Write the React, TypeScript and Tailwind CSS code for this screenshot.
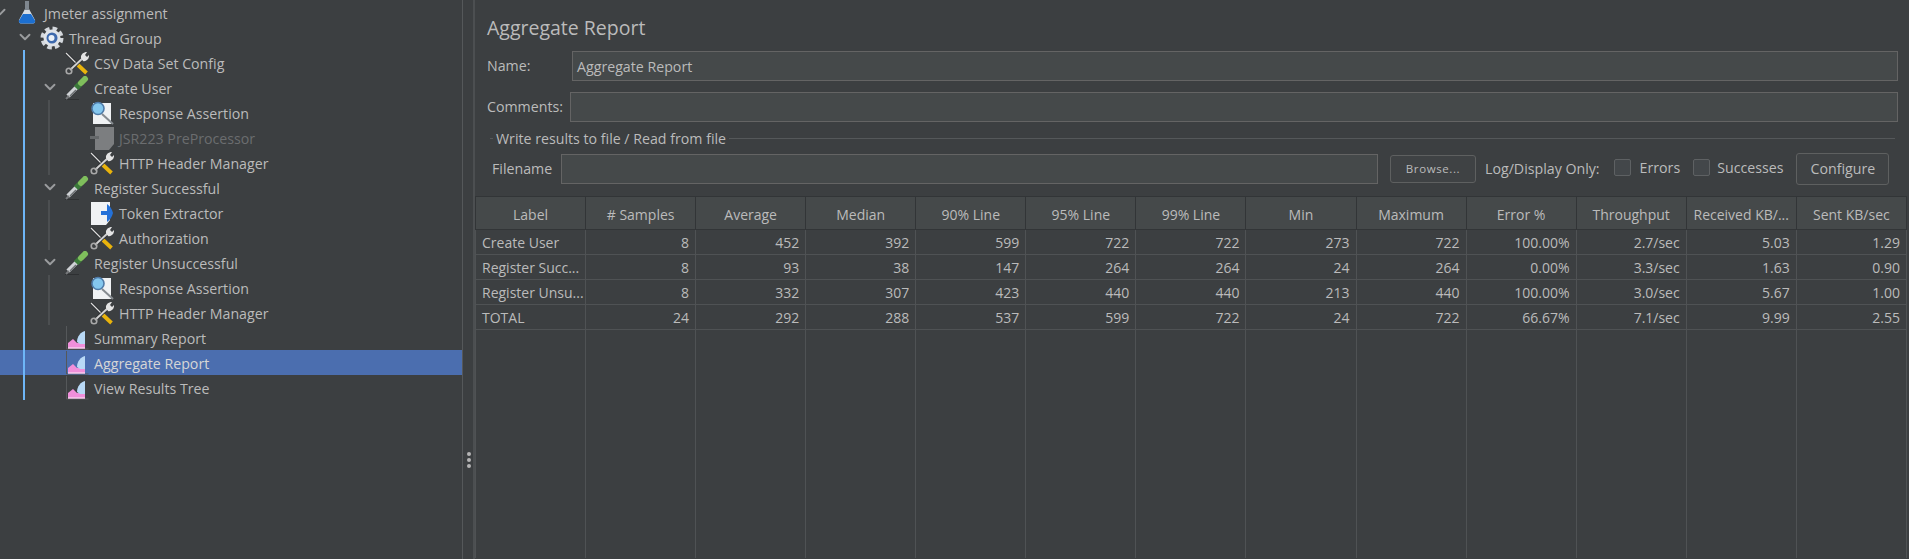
import { ChevronDown } from 'lucide-react';

const FONT = "font-['Open_Sans','Noto_Sans',sans-serif]";

const Flask = () => (
  <svg width="24" height="25" viewBox="0 0 24 25">
    <path d="M10 1h4v8l6 11c.5 2-.5 3.500-2 3.500H6c-1.500 0-2.500-1.500-2-3.500l6-11z" fill="#d5dde6" />
    <path d="M8 14h8l4 6.500c.5 1.500-.5 3-2 3H6c-1.500 0-2.500-1.500-2-3z" fill="#1c6fd0" />
    <rect x="10" y="1" width="4" height="9" fill="#7f878f" />
  </svg>
);

const Gear = () => (
  <svg width="24" height="24" viewBox="0 0 24 24">
    <circle cx="12" cy="12" r="9.500" fill="none" stroke="#d4d8dd" strokeWidth="4" strokeDasharray="4.500 3" />
    <circle cx="12" cy="12" r="8.500" fill="#dfe3e8" />
    <circle cx="12" cy="12" r="5.500" fill="#3d69ad" />
    <circle cx="11.500" cy="12" r="3" fill="#eaf0f7" />
  </svg>
);

const Tools = () => (
  <svg width="24" height="24" viewBox="0 0 24 24" fill="none">
    <path d="M1 2l13 13" stroke="#222426" strokeWidth="2.500" />
    <path d="M1 2l13 13" stroke="#dcdcdc" strokeWidth="1.200" />
    <path d="M13 14l8.500 8" stroke="#e9b30c" strokeWidth="3.800" />
    <path d="M19 6L5 19" stroke="#2c2e30" strokeWidth="3.500" />
    <path d="M19 6L5 19" stroke="#d0d0d0" strokeWidth="2" />
    <path d="M16 7c-.5-3 2-6 6-6l-2 3 2 2 2-2c.5 4-3 7-6 6z" fill="#e4e4e4" />
    <circle cx="4" cy="20" r="2.800" stroke="#a8a8a8" strokeWidth="1.600" />
  </svg>
);

const Pipette = () => (
  <svg width="24" height="24" viewBox="0 0 24 24" fill="none">
    <path d="M0 23.500h14" stroke="#2e3032" strokeWidth="1" />
    <path d="M3 20L12 11" stroke="#cfd2d5" strokeWidth="4.500" />
    <path d="M1 23l3-3" stroke="#77797b" strokeWidth="2" />
    <path d="M5 20l6-6" stroke="#6c7073" strokeWidth="1.500" />
    <path d="M11 12l4-4" stroke="#3c7a3a" strokeWidth="6" />
    <path d="M16 7l4-4" stroke="#7fbe5c" strokeWidth="6" strokeLinecap="round" />
  </svg>
);

const Lens = () => (
  <svg width="24" height="24" viewBox="0 0 24 24" fill="none">
    <rect x="3" y="2" width="18" height="21" fill="#f0f2f4" />
    <path d="M12 13l11 10" stroke="#868b90" strokeWidth="2" />
    <circle cx="8" cy="7.500" r="6" fill="#84c7ee" stroke="#4f7ba8" strokeWidth="1.600" />
  </svg>
);

const Proc = () => (
  <svg width="24" height="24" viewBox="0 0 24 24">
    <path d="M5 1h19v17l-5 6H5z" fill="#7c7e80" />
    <rect x="0" y="10" width="9" height="3" fill="#65686a" />
  </svg>
);

const Extract = () => (
  <svg width="24" height="24" viewBox="0 0 24 24">
    <path d="M1 1h19v18l-4 5H1z" fill="#f0f2f4" />
    <path d="M11 10h6V3c3 2 5 5 6 9-1 4-3 7-6 9v-7h-6z" fill="#2471d8" />
  </svg>
);

const Graph = () => (
  <svg width="24" height="24" viewBox="0 0 24 24" fill="none">
    <path d="M1.500 0v23h22" stroke="#55585a" strokeWidth="1" />
    <path d="M3 22v-5l5-4 4 4h8v5z" fill="#f08fda" />
    <path d="M12 16c0-6 4-10 8-11v13h-5z" fill="#b8d9f6" />
    <path d="M3 22h17" stroke="#f9cdee" strokeWidth="1.500" />
  </svg>
);

const icons = { Flask, Gear, Tools, Pipette, Lens, Proc, Extract, Graph };

type TreeItem = {
  label: string;
  depth: number;
  icon: keyof typeof icons;
  open?: boolean;
  disabled?: boolean;
  selected?: boolean;
};

const tree: TreeItem[] = [
  { label: 'Jmeter assignment', depth: 0, icon: 'Flask', open: true },
  { label: 'Thread Group', depth: 1, icon: 'Gear', open: true },
  { label: 'CSV Data Set Config', depth: 2, icon: 'Tools' },
  { label: 'Create User', depth: 2, icon: 'Pipette', open: true },
  { label: 'Response Assertion', depth: 3, icon: 'Lens' },
  { label: 'JSR223 PreProcessor', depth: 3, icon: 'Proc', disabled: true },
  { label: 'HTTP Header Manager', depth: 3, icon: 'Tools' },
  { label: 'Register Successful', depth: 2, icon: 'Pipette', open: true },
  { label: 'Token Extractor', depth: 3, icon: 'Extract' },
  { label: 'Authorization', depth: 3, icon: 'Tools' },
  { label: 'Register Unsuccessful', depth: 2, icon: 'Pipette', open: true },
  { label: 'Response Assertion', depth: 3, icon: 'Lens' },
  { label: 'HTTP Header Manager', depth: 3, icon: 'Tools' },
  { label: 'Summary Report', depth: 2, icon: 'Graph' },
  { label: 'Aggregate Report', depth: 2, icon: 'Graph', selected: true },
  { label: 'View Results Tree', depth: 2, icon: 'Graph' },
];

const columns = ['Label', '# Samples', 'Average', 'Median', '90% Line', '95% Line', '99% Line', 'Min', 'Maximum', 'Error %', 'Throughput', 'Received KB/...', 'Sent KB/sec'];

const rows = [
  ['Create User', '8', '452', '392', '599', '722', '722', '273', '722', '100.00%', '2.7/sec', '5.03', '1.29'],
  ['Register Succ...', '8', '93', '38', '147', '264', '264', '24', '264', '0.00%', '3.3/sec', '1.63', '0.90'],
  ['Register Unsu...', '8', '332', '307', '423', '440', '440', '213', '440', '100.00%', '3.0/sec', '5.67', '1.00'],
  ['TOTAL', '24', '292', '288', '537', '599', '722', '24', '722', '66.67%', '7.1/sec', '9.99', '2.55'],
];

const TreeRow = ({ item }: { item: TreeItem }) => {
  const Icon = icons[item.icon];
  const indent = ['pl-0', 'pl-[25px]', 'pl-[50px]', 'pl-[75px]'][item.depth];
  return (
    <div className={`flex h-[25px] items-center ${indent} ${item.selected ? 'bg-[#4b6eaf]' : ''}`}>
      <span className="relative h-[25px] w-[15px] shrink-0">
        {item.open && <ChevronDown size={18} strokeWidth={2.5} className="absolute left-[-9px] top-[3px] text-[#9a9c9e]" />}
      </span>
      <span className="flex w-[29px] shrink-0 justify-start"><Icon /></span>
      <span className={`whitespace-nowrap pt-[2px] ${item.disabled ? 'text-[#6b6d6f]' : item.selected ? 'text-[#d6d6d6]' : 'text-[#bbbbbb]'}`}>
        {item.label}
      </span>
    </div>
  );
};

const Input = ({ value, className }: { value?: string; className: string }) => (
  <div className={`flex items-center border border-[#646464] bg-[#45494a] px-1 pt-px text-[#bbbbbb] ${className}`}>{value}</div>
);

const Check = () => <span className="mt-[-2px] h-[17px] w-[17px] rounded-[2px] border border-[#5e6163] bg-[#43474a]" />;

export default function App() {
  return (
    <div className={`flex h-[559px] w-[1909px] overflow-hidden bg-[#3c3f41] text-[14.2px] text-[#bbbbbb] ${FONT}`}>
      <div className="relative w-[462px] shrink-0">
        {tree.map((item, i) => <TreeRow key={i} item={item} />)}
        <div className="absolute left-[23px] top-[50px] h-[350px] w-[2px] bg-[#6eb6f7]" />
        <div className="absolute left-[48px] top-[100px] h-[75px] w-[2px] bg-[#4c4f51]" />
        <div className="absolute left-[48px] top-[200px] h-[50px] w-[2px] bg-[#4c4f51]" />
        <div className="absolute left-[48px] top-[275px] h-[50px] w-[2px] bg-[#4c4f51]" />
      </div>
      <div className="relative w-[13px] shrink-0 border-l border-[#55585a] border-r-2 border-r-[#4c4f51]">
        <span className="absolute left-[4px] top-[452px] h-[4px] w-[4px] rounded-full bg-[#b5b5b5]" />
        <span className="absolute left-[4px] top-[458px] h-[4px] w-[4px] rounded-full bg-[#b5b5b5]" />
        <span className="absolute left-[4px] top-[464px] h-[4px] w-[4px] rounded-full bg-[#b5b5b5]" />
      </div>
      <div className="flex min-w-0 flex-1 flex-col">
        <div className="pl-[12px] pr-[11px] pt-[14px]">
          <div className="h-[37px] text-[19.5px] leading-[28px]">Aggregate Report</div>
          <div className="flex h-[30px] items-center">
            <span className="w-[85px] shrink-0">Name:</span>
            <Input value="Aggregate Report" className="h-[30px] flex-1" />
          </div>
          <div className="mt-[11px] flex h-[30px] items-center">
            <span className="w-[83px] shrink-0">Comments:</span>
            <Input className="h-[30px] flex-1" />
          </div>
          <div className="relative mt-[15px] h-[46px] pl-[5px] pt-[16px]">
            <div className="absolute left-[3px] right-[3px] top-[1px] h-px bg-[#55585a]" />
            <span className="absolute left-[6px] top-[-9px] bg-[#3c3f41] px-[3px]">Write results to file / Read from file</span>
            <div className="flex items-center">
              <span className="w-[69px] shrink-0">Filename</span>
              <Input className="h-[30px] w-[817px]" />
              <button className="ml-[12px] h-[28px] w-[86px] rounded-[3px] border border-[#5e6060] bg-[#3f4244] text-[11.5px] tracking-[0.6px]">Browse...</button>
              <span className="ml-[9px] whitespace-nowrap">Log/Display Only:</span>
              <span className="ml-[14px] flex items-center"><Check /><span className="ml-[9px] mt-[-2px]">Errors</span></span>
              <span className="ml-[13px] flex items-center"><Check /><span className="ml-[7px] mt-[-2px]">Successes</span></span>
              <button className="ml-[13px] h-[32px] w-[93px] rounded-[3px] border border-[#5e6060] bg-[#3f4244]">Configure</button>
            </div>
          </div>
        </div>
        <table className="mt-[13px] h-[362px] w-[1432px] table-fixed border-collapse text-[14px]">
          <thead>
            <tr className="h-[33px] bg-[#45494a]">
              {columns.map(c => (
                <th key={c} className="overflow-hidden whitespace-nowrap border border-[#323537] px-0 pt-[2px] text-center font-normal">{c}</th>
              ))}
            </tr>
          </thead>
          <tbody>
            {rows.map(row => (
              <tr key={row[0]} className="h-[25px]">
                {row.map((cell, i) => (
                  <td key={i} className={`overflow-hidden whitespace-nowrap border border-[#4f5254] ${i === 0 ? 'pl-[6px] text-left' : 'pr-[6px] text-right'}`}>{cell}</td>
                ))}
              </tr>
            ))}
            <tr>
              {columns.map(c => <td key={c} className="border-x border-[#4f5254]" />)}
            </tr>
          </tbody>
        </table>
      </div>
    </div>
  );
}
